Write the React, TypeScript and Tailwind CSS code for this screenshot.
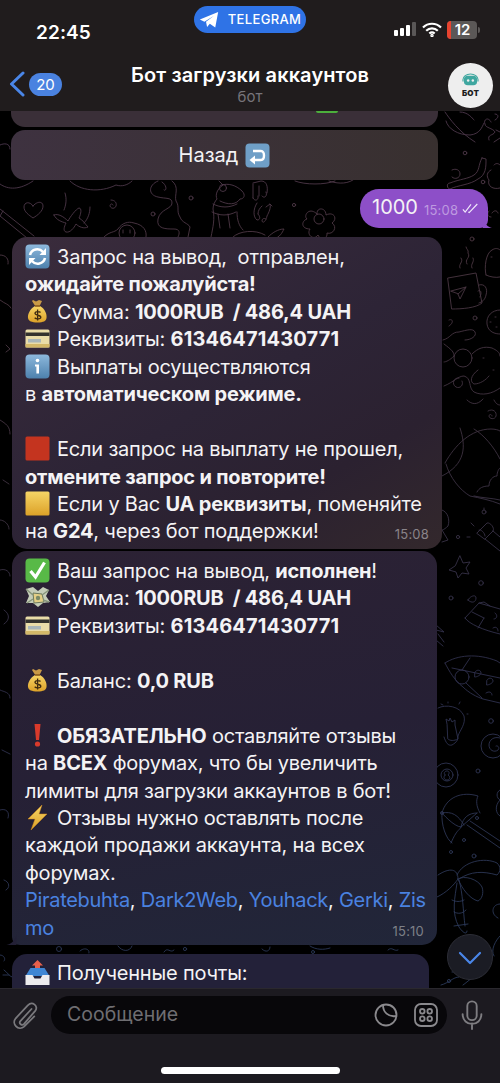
import React from "react";

const font = "font-['Inter','Noto_Sans',sans-serif]";

// emoji drawings, every one sits in a 25x25 box
function Emoji({ kind }: { kind: string }) {
  return (
    <svg viewBox="0 0 25 25" className="w-[25px] h-[25px] inline-block shrink-0 align-[-5px] mr-[7px]">
      <defs>
        <linearGradient id={`bl-${kind}`} x1="0" y1="0" x2="0" y2="1">
          <stop offset="0" stopColor="#8db8dc" />
          <stop offset="1" stopColor="#4d81ad" />
        </linearGradient>
        <linearGradient id={`gd-${kind}`} x1="0" y1="0" x2="0" y2="1">
          <stop offset="0" stopColor="#f6d566" />
          <stop offset="1" stopColor="#dca128" />
        </linearGradient>
      </defs>
      {kind === "refresh" && (
        <>
          <rect x="0.5" y="0.5" width="24" height="24" rx="4" fill={`url(#bl-${kind})`} />
          <path d="M5 11a7.5 7.5 0 0 1 13-3" fill="none" stroke="#fff" strokeWidth="2.6" />
          <path d="M20 14a7.5 7.5 0 0 1-13 3" fill="none" stroke="#fff" strokeWidth="2.6" />
          <path d="M21 4v7h-6.5z M4 21v-7h6.5z" fill="#fff" />
        </>
      )}
      {kind === "bag" && (
        <>
          <path d="M8 1l3 1.6L14 1l3 1-2.4 5h-4.4L7 2z" fill="#c99a46" />
          <path d="M10 7h5c5 3 7 8 6.500 12-.4 3-3 4.500-9 4.500S3.500 22 3 19C2.500 15 5 10 10 7z" fill={`url(#gd-${kind})`} />
          <path d="M10 7h5" stroke="#8a5a1c" strokeWidth="1.600" />
          <path d="M15.500 13.500c-1-1.300-5.500-1.300-5.500.8 0 2.500 5.800 1.400 5.800 4 0 2-4.800 2-6.100.5M12.600 10.500v11" fill="none" stroke="#3d2a10" strokeWidth="1.300" />
        </>
      )}
      {kind === "card" && (
        <>
          <rect x="0.500" y="3.500" width="24" height="18" rx="1.500" fill="#e9dca8" />
          <rect x="0.500" y="6.500" width="24" height="3.500" fill="#33322e" />
          <rect x="3" y="13" width="13" height="3.500" fill="#a9b6b8" />
          <rect x="0.500" y="18" width="24" height="3.500" fill="#d3b868" />
        </>
      )}
      {kind === "info" && (
        <>
          <rect x="0.500" y="0.500" width="24" height="24" rx="4" fill={`url(#bl-${kind})`} />
          <circle cx="12.500" cy="6.500" r="1.800" fill="#fff" />
          <path d="M10 10.500h4v9h-2.600v-7H10z" fill="#fff" />
        </>
      )}
      {kind === "red" && <rect x="0.500" y="0.500" width="24" height="24" rx="1.500" fill="#c4341f" />}
      {kind === "yellow" && <rect x="0.500" y="0.500" width="24" height="24" rx="1.500" fill={`url(#gd-${kind})`} />}
      {kind === "check" && (
        <>
          <rect x="0.500" y="0.500" width="24" height="24" rx="4" fill="#58b947" />
          <path d="M5.500 13l5 6L19.500 4.500" fill="none" stroke="#fff" strokeWidth="3.200" />
        </>
      )}
      {kind === "money" && (
        <>
          <path d="M1 4l7-2 5 4 5-4 6 3-3 6 4 6-7 1-5 4-5-4-7 0 3-7z" fill="#c5cdb8" />
          <path d="M8 8l9 1 2 8-10 1z" fill="#e3cf86" stroke="#6d7a5c" />
          <path d="M1 4l7 6M24 5l-7 5M2 18l6-4M24 17l-6-2" stroke="#86947a" strokeWidth="1.400" />
          <circle cx="13" cy="13" r="2.200" fill="#7b8a66" />
        </>
      )}
      {kind === "bang" && (
        <>
          <path d="M9.500 1h6l-1.500 16h-3z" fill="#d93a2b" />
          <circle cx="12.500" cy="21" r="2.600" fill="#d93a2b" />
        </>
      )}
      {kind === "bolt" && <path d="M17 0L3 14h7L6 25 22 9h-8z" fill={`url(#gd-${kind})`} stroke="#d58a1c" strokeWidth="0.500" />}
      {kind === "tray" && (
        <>
          <path d="M12.500 0l5.500 5.500h-3V11h-5V5.500H7z" fill="#e8604c" />
          <path d="M5.500 8h14l5 8H0.500z" fill="#3f86d4" />
          <path d="M0.500 15h7l2 3.500h6l2-3.500h7v10h-24z" fill="#ecebee" />
        </>
      )}
    </svg>
  );
}

function Line({ children }: { children?: React.ReactNode }) {
  return <div className="h-[27.45px] leading-[27.45px] whitespace-pre tracking-[-0.2px]">{children}</div>;
}

function Time({ children, className }: { children: string; className: string }) {
  return <span className={`absolute text-[13px] tracking-[0.2px] ${className}`}>{children}</span>;
}

function Link({ children }: { children: string }) {
  return <span className="text-[#4a82e0] tracking-[-0.3px]">{children}</span>;
}

// the wallpaper: thin line doodles in page coordinates, only what shows between bubbles
function Doodles() {
  return (
    <svg viewBox="0 111 500 877" className="absolute left-0 top-0 w-[500px] h-[877px]" fill="none" strokeWidth="0.900" strokeLinecap="round" strokeLinejoin="round">
      <defs>
        <linearGradient id="wall" gradientUnits="userSpaceOnUse" x1="0" y1="111" x2="120" y2="988">
          <stop offset="0" stopColor="#4b3650" />
          <stop offset="0.2" stopColor="#4d3742" />
          <stop offset="0.45" stopColor="#3d3140" />
          <stop offset="0.7" stopColor="#2e2f4c" />
          <stop offset="1" stopColor="#2a3858" />
        </linearGradient>
      </defs>
      <g stroke="url(#wall)">
        {/* strip under the back button */}
        <path d="M0 184c8 6 20 6 33-3M70 181c10 10 30 12 46 4 6 2 12 0 16-4" />
        <path d="M0 209l34 27M0 216l27 22M3 211l-3 5" />
        <path d="M33 206c-3-5-9-4-9 1 0 5 5 8 9 11 5-3 10-7 10-12 0-5-6-5-10 0z" />
        <path d="M65 193c2 6 1 12-1 17M90 207c0 6-2 12-6 16" />
        <path d="M54 215c4-2 10 2 14 6 2-4 8-12 11-13 3 0 2 6 0 10 4 2 6 6 9 9-4 2-9 0-12-3-2 4-6 9-10 8-3-1-2-5 0-9-4-1-10-3-12-8z" />
        <path d="M111 200c4 0 6 3 5 6-1 3-5 3-6 0 0-2 2-3 3-1" />
        <circle cx="153" cy="214" r="2" />
        <path d="M104 237c6-6 10-4 14-8 4-6 10-8 16-6 10 2 13 8 12 14" />
        <circle cx="127" cy="233" r="8" />
        <path d="M123 230v3M130 230v3" />
        <path d="M158 181c-10 4-10 14 0 16 8 2 14 0 14 6s-12 6-14 16c-2 10 8 10 16 10 6 0 6 4 4 8" />
        <path d="M162 182c6 4 4 10 2 8M172 181c8 6 2 14 4 20 4 6 0 10 4 16 2 6 8 6 10 10l-2 10" />
        <circle cx="191" cy="198" r="2" />
        <path d="M211 237c2-10 4-18 2-28 0-4 2-8 4-10-2-4 0-10 6-14l-4-4M222 185c6-2 14 0 20 6 4 4 2 8-2 8-4 6-12 6-20 2" />
        <circle cx="223" cy="188" r="3.500" />
        <path d="M213 204c8 4 16 4 24 0M212 212c8 4 16 4 24 0M218 214l2 14M228 214l2 14M237 212c0 8 2 14 6 18" />
        <path d="M233 237c6-6 22-8 32-2M268 237c4-4 10-8 16-8-2 4-4 8-10 10" />
        <path d="M253 183l8-2c6 0 7 6 6 12M253 184v14M259 186v10M253 198c2 4 6 2 5-2M266 192c2 4-2 7-4 4" />
        <path d="M257 203c-4 6-4 14 0 17 4 0 3-4 1-6M262 206c-2 2-4 4-4 8" />
        <path d="M266 207l4-3c1 4-1 8-3 12-1 5-4 8-5 5 0-3 3-3 4-2M270 204l2 2" />
        <circle cx="294" cy="205" r="1.600" />
        <circle cx="319" cy="219" r="5" />
        <path d="M317 214c-8-8-14 2-10 5-6 2-6 10 3 10-4 6 4 12 8 6 2 6 10 4 9-2 6 2 11-6 5-10 6-4 2-12-6-8 0-8-10-8-9-1z" />
        <path d="M295 181c10 4 30 4 40 0M329 181c6 2 16 4 24-1" />

        {/* right column, top */}
        <path d="M445 112c4 6 14 20 30 30M446 121c2 8 12 14 24 14 10-1 12-8 14-12M460 112c8 0 12 6 14 8" />
        <path d="M491 122c-3-6-8-2-6 2 0 4 8 4 10 8-2 4-8 2-6 8M495 114c4 0 4 4 0 6M496 130l4 2M494 142l6-4" />
        <path d="M482 158l4 1c0 8 0 16-8 20-8 6-20 6-28 10-3 0-4-6 0-6 10-4 18-4 24-8 6-4 4-10 8-17z" />
        <path d="M452 170c4-2 8 0 8 4 0 4-5 6-8 3" />
        <circle cx="465" cy="153" r="1.800" />
        <circle cx="483" cy="182" r="1.800" />
        <path d="M491 170c-4 2-5 6-2 10-2 6 4 10 11 8M494 165c2-2 4-2 6 0" />
        <path d="M492 213c2-3 5-3 6 0M491 217c-4 0-4-4-2-6" />
        <circle cx="472" cy="239" r="2" />
        <path d="M460 268c-2-4 4-6 1-10M467 264c-3-5 4-6 1-11 1-3-2-4-2-6M472 268c-2-4 3-6 1-10" />
        <path d="M448 278l28-5 6 30c-6 5-20 6-30 6z" />
        <path d="M479 285c6-2 9 4 7 10-1 5-4 7-7 8M478 291c3-2 4 2 2 6" />
        <path d="M451 291l15-4-6 12-2-5zM458 294l8-7" />
        <path d="M486 275c-2-8 0-22 6-25 3-2 6-2 8 0M486 275c4 2 10 3 14 2M491 257h1" />
        <circle cx="475" cy="318" r="2" />
        <path d="M449 320c4-2 5 3 0 6M500 310c-8 0-14 6-13 14 1 8 8 10 13 10" />
        <path d="M495 317h1M490 322h1M496 327h1" />
        <path d="M443 340c8-2 8-8 16-8 8-2 14-4 16 0 2 4-4 8-10 8" />
        <circle cx="463" cy="358" r="9" />
        <path d="M444 344c8 6 10 8 10 12-4 4-8 6-10 6M472 354c6-6 12-8 20-6 4 2 8 4 8 8M444 386c10-4 14-10 20-10 8 2 4 12 10 16 8 4 18 2 26-4" />
        <path d="M459 378c-5-1-8 6-3 9 4 2 8-2 6-6M483 358h1M493 370h1" />
        <path d="M478 370c-8 6-8 12-4 14 6 0 12-4 15-8" />

        {/* right column, middle */}
        <path d="M467 400c4 4 10 6 16-1M488 411c5-3 9 1 8 5-1 4-7 3-7 0 0-2 3-2 3 0" />
        <path d="M494 400c2 4 4 5 6 5" />
        <path d="M445 463c10-18 26-34 46-34 4 0 8 1 9 2" />
        <path d="M460 428c6 18 6 36-18 48M474 429c10 6 20 18 26 30" />
        <path d="M446 464c4 14 14 26 24 32 10 2 20 4 30 8M474 496c8 2 18 2 26 4M477 492c2-4 6-6 12-6 0-6 4-10 8-10 0-4 2-8 3-8" />
        <path d="M442 510c6 2 8 10 6 16-4 4-8 6-12 4" />
        <path d="M442 530l6 10-6 2" />
        <circle cx="458" cy="537" r="1.600" />
        <path d="M484 508v2M474 526l-3-3M470 537h-3" />
        <path d="M477 533l10-10c3-1 8 5 6 8l-8 8zM479 530c2-1 6 3 6 6M493 531l7 6M485 539l15 12" />
        <circle cx="484" cy="512" r="2" />
        <path d="M460 556l3 7 7-1-4 6 3 6-7-1-4 5-2-6-7-2 6-4z" />
        <circle cx="481" cy="583" r="2.300" />
        <circle cx="451" cy="598" r="2" />
        <path d="M468 600c2-4 8-6 8-2 0 4-4 6-8 2z" />
        <path d="M465 618l14-15 21 6M465 618c4 6 18 12 35 16M479 603l5-1 6 4M472 612l12 6M484 618l-6 10" />
        <path d="M495 613c3 2 2 6-1 6M493 628c3-2 5 0 5 3" />
        <path d="M436 625l8 7-8-2M438 634l6 8M436 640l7 6" />
        <path d="M445 663c12-8 32-10 52-2l3 2M445 663c4 8 10 18 18 24 6 6 14 10 20 12l17 4" />
        <circle cx="462" cy="677" r="7" />
        <path d="M462 670l8-12M466 683l16 15M452 668l48 10" />
        <path d="M475 672c2-3 6-2 6 1 0 2-4 4-6 4zM487 680c2-3 6-2 6 1 0 2-4 4-6 4zM486 693c3-2 6-1 6 2" />

        {/* right column, bottom */}
        <path d="M438 708c8-4 22-2 26 8 2 8-4 14-6 20 0 4-1 6-6 9-4 1-6-2-8-8" />
        <path d="M447 724l-1-5 3 2 1-3 2 4 3-2 0 5 3 14c-4 2-8 2-10 0z" />
        <path d="M441 704l2 1M448 702v1M460 702l-1 2M467 714h1" />
        <circle cx="491" cy="721" r="2.300" />
        <circle cx="493" cy="746" r="12" />
        <path d="M500 738c-6-2-11 2-11 7 0 5 5 8 9 5 2-2 0-5-2-4" />
        <circle cx="446" cy="775" r="12" />
        <circle cx="447" cy="775" r="6" />
        <path d="M445 775c-2-2 0-4 2-4s3 2 1 4c3 2 2 5-1 5s-4-3-2-5z" />
        <circle cx="478" cy="771" r="2" />
        <path d="M500 790c-4 2-4 8 0 10" />
        <path d="M442 813c4-16 20-22 36-17-2 4-2 10 2 17M442 813c-1 12 4 26 10 30" />
        <path d="M442 813c10-2 16 2 22 12M477 813c-8 0-14 4-16 14 -2 4-4 2-10 16" />
        <path d="M442 813c0 0 12 14 19 14M477 813l-16 14M467 825l33 23M470 821l30 20" />
        <circle cx="442" cy="813" r="1.500" />
        <circle cx="477" cy="818" r="1.500" />
        <circle cx="464" cy="840" r="1.500" />
        <circle cx="474" cy="856" r="2" />
        <circle cx="451" cy="852" r="1.500" />
        <path d="M500 800c-6 6-4 14 0 16M500 904c-8 0-10 10-2 14M500 936c-4 4-10 14-6 20" />
        <path d="M457 875c6-14 28-18 40-12 4 4 4 8 0 12-14-4-26-4-38 4" />
        <path d="M438 875c12-8 20-6 20 4-4 6-12 14-21 18M458 879c6-4 20 0 24 8 2 6 0 12-4 14-8-2-16-12-20-22z" />
        <path d="M457 883c-2 14-6 30 2 44 4 6 8 8 8 4M459 880c4 14 4 30 6 46M452 900c4 2 8 2 12 0M454 912c4 2 8 2 12-2M454 926l14-2" />
        <path d="M441 985c8-2 12-8 18-8M463 985c6-4 10-10 16-8M452 972h1" />
        <circle cx="449" cy="981" r="1.600" />

        {/* bits on the left edge */}
        <path d="M0 145c4-2 10-2 10 4M0 255c6 0 9 4 8 9M0 300c5 4 9 4 11 8M6 345l4 4-4 3M0 420c6 4 10 6 10 14M3 480l6 4M0 520c4 0 9 4 9 9" />
        <path d="M0 570c6-2 10 2 10 6M4 610c6 4 6 10 0 14M0 690c4 2 10 2 10 8M2 750l8 4M0 810c6-2 10 2 8 8M4 880c6 2 6 8 2 10" />
        <path d="M0 955c4 0 6 4 4 6M3 975h6M4 970c4 3 5 6 8 7" />

        {/* gap over the third bubble */}
        <path d="M80 951c4-4 10-2 9 2M118 946c4 6 12 6 14 0M164 952c4-6 6 2 10-2M262 949c4 4 8 2 8-2M310 946c6 4 14 4 20 2M388 950c4-4 6 2 10 0" />
        <circle cx="59" cy="949" r="2.500" />
        <circle cx="185" cy="949" r="1.600" />
        <circle cx="313" cy="952" r="1.500" />
      </g>
    </svg>
  );
}

export default function App() {
  return (
    <div className={`w-[500px] h-[1083px] flex flex-col overflow-hidden bg-black text-white ${font}`}>
      {/* шапка */}
      <div className="relative z-10 h-[111px] shrink-0 bg-[#201c1d]">
        <div className="absolute left-[36px] top-[19px] text-[19px] font-semibold tracking-[0.1px]">22:45</div>

        <div className="absolute left-[194px] top-[6px] w-[112px] h-[27px] rounded-full bg-[#2f73e6] flex items-center justify-center gap-[7px]">
          <svg viewBox="0 0 24 24" className="w-[24px] h-[20px] -ml-[2px]" fill="#fff">
            <path d="M1 11.500L23 2.500 19.500 21l-6.500-4.600-3.300 4.100-1.300-6.300L18 7 6.500 14z" />
          </svg>
          <span className="text-[13px] font-medium tracking-[0.35px]">TELEGRAM</span>
        </div>

        <div className="absolute left-[394px] top-[22px] flex items-end gap-[2px]">
          <div className="w-[4px] h-[6px] rounded-[1px] bg-white" />
          <div className="w-[4px] h-[8px] rounded-[1px] bg-white" />
          <div className="w-[4px] h-[11px] rounded-[1px] bg-white" />
          <div className="w-[4px] h-[14px] rounded-[1px] bg-[#5a5757]" />
        </div>
        <svg viewBox="0 0 20 15" className="absolute left-[422px] top-[22px] w-[20px] h-[15px]" fill="none" stroke="#fff" strokeWidth="2.200">
          <path d="M1 5.500c5-5 13-5 18 0M4.200 8.700c3.300-3.200 8.300-3.200 11.600 0M7.300 11.500c1.500-1.300 3.900-1.300 5.400 0" />
          <circle cx="10" cy="13.500" r="0.600" fill="#fff" />
        </svg>
        <div className="absolute left-[447px] top-[21px] w-[30px] h-[18px] rounded-[4px] bg-[#5b5857] flex">
          <div className="w-[4px] rounded-l-[4px] bg-[#e8432f]" />
          <div className="flex-1 text-center text-[15px] leading-[18px] font-semibold pr-[3px]">12</div>
        </div>
        <div className="absolute left-[478px] top-[27px] w-[2px] h-[6px] rounded-r-sm bg-[#5b5857]" />

        <svg viewBox="0 0 16 26" className="absolute left-[9px] top-[71px] w-[16px] h-[26px]" fill="none" stroke="#4a86e8" strokeWidth="3" strokeLinecap="round" strokeLinejoin="round">
          <path d="M14 2L2.500 13 14 24" />
        </svg>
        <div className="absolute left-[29px] top-[73px] w-[33px] h-[23px] rounded-full bg-[#4a82e0] text-center text-[15px] leading-[23px]">20</div>

        <div className="absolute left-0 right-0 top-[63px] text-center text-[20px] leading-[25px] font-semibold tracking-[0.1px]">Бот загрузки аккаунтов</div>
        <div className="absolute left-0 right-0 top-[88px] text-center text-[15px] leading-[17px] text-[#77747a]">бот</div>

        <div className="absolute left-[448px] top-[63px] w-[45px] h-[45px] rounded-full bg-[#eeeeee] flex flex-col items-center">
          <svg viewBox="0 0 20 16" className="w-[19px] h-[15px] mt-[10px]" fill="none">
            <rect x="3" y="3" width="14" height="10" rx="4" fill="#3fa7a0" />
            <path d="M2 9V7a8 6 0 0 1 16 0v2" stroke="#3fa7a0" strokeWidth="1.200" />
            <circle cx="7.500" cy="8" r="1.300" fill="#eee" />
            <circle cx="12.500" cy="8" r="1.300" fill="#eee" />
          </svg>
          <span className="mt-[1px] text-[8px] leading-[9px] font-black text-[#1d1d1d] tracking-[0.2px]">БОТ</span>
        </div>
      </div>

      {/* сообщения */}
      <div className="relative flex-1 min-h-0 overflow-hidden pl-[12px] text-[20px] text-[#f4f3f5]">
        <Doodles />
        <div className="relative">
          <div className="h-[16px] w-[427px] -ml-px rounded-b-[14px] bg-[#3a2f38] flex justify-end pr-[100px]">
            <div className="w-[22px] h-[2px] bg-[#4caf3c] rounded-b-sm" />
          </div>
          <div className="mt-[3px] h-[50px] w-[427px] -ml-px rounded-[14px] bg-[linear-gradient(90deg,#3e3240,#38302f)] flex items-center justify-center gap-[7px]">
            <span>Назад</span>
            <svg viewBox="0 0 25 25" className="w-[25px] h-[25px]">
              <rect x="0.500" y="0.500" width="24" height="24" rx="4" fill="#6f9fc7" />
              <path d="M8 17h8c4 0 4-9 0-9H8" fill="none" stroke="#fff" strokeWidth="2.400" />
              <path d="M10 12.500L4.500 17l5.500 4.500z" fill="#fff" />
            </svg>
          </div>

          <div className="relative mt-[9px] ml-[348px] w-[128px] h-[39px] rounded-[19px] rounded-br-[8px] bg-[#8d4fc8]">
            <span className="absolute left-[12px] top-[5px] text-[20px] leading-[27px]">1000</span>
            <Time className="left-[64px] top-[11px] text-[#bd9ae0] leading-[20px]">15:08</Time>
            <svg viewBox="0 0 20 12" className="absolute left-[102px] top-[14px] w-[18px] h-[11px]" fill="none" stroke="#f0e8fa" strokeWidth="1.300">
              <path d="M1 7l2.500 3L10 1.500M7 10l1 .5L17 1" />
            </svg>
            <svg viewBox="0 0 10 10" className="absolute left-[122px] top-[30px] w-[11px] h-[9px]" fill="#8d4fc8">
              <path d="M0 0c2 5 5 9 10 10H0z" />
            </svg>
          </div>

          <div className="relative mt-[9px] w-[430px] h-[312px] rounded-[15px] bg-[linear-gradient(150deg,#3a2c3c_0%,#2d2436_50%,#2b2130_75%,#33282c_100%)] pl-[13px] pt-[7px]">
            <Line><Emoji kind="refresh" />Запрос на вывод,  отправлен,</Line>
            <Line><b>ожидайте пожалуйста!</b></Line>
            <Line><Emoji kind="bag" />Сумма: <b>1000RUB  / 486,4 UAH</b></Line>
            <Line><Emoji kind="card" />Реквизиты: <b className="tracking-[0.15px]">61346471430771</b></Line>
            <Line><Emoji kind="info" />Выплаты осуществляются</Line>
            <Line>в <b>автоматическом режиме.</b></Line>
            <Line />
            <Line><Emoji kind="red" />Если запрос на выплату не прошел,</Line>
            <Line><b>отмените запрос и повторите!</b></Line>
            <Line><Emoji kind="yellow" />Если у Вас <b>UA реквизиты</b>, поменяйте</Line>
            <Line>на <b>G24</b>, через бот поддержки!</Line>
            <Time className="right-[13px] bottom-[5px] text-[#8a8489]">15:08</Time>
          </div>

          <div className="relative mt-[2px] w-[425px] h-[394px] rounded-[15px] rounded-bl-[8px] bg-[linear-gradient(170deg,#2c2234_0%,#262035_50%,#212639_100%)] pl-[13px] pt-[7px]">
            <Line><Emoji kind="check" />Ваш запрос на вывод, <b>исполнен</b>!</Line>
            <Line><Emoji kind="money" />Сумма: <b>1000RUB  / 486,4 UAH</b></Line>
            <Line><Emoji kind="card" />Реквизиты: <b className="tracking-[0.15px]">61346471430771</b></Line>
            <Line />
            <Line><Emoji kind="bag" />Баланс: <b>0,0 RUB</b></Line>
            <Line />
            <Line><Emoji kind="bang" /><b>ОБЯЗАТЕЛЬНО</b> оставляйте отзывы</Line>
            <Line>на <b>ВСЕХ</b> форумах, что бы увеличить</Line>
            <Line>лимиты для загрузки аккаунтов в бот!</Line>
            <Line><Emoji kind="bolt" />Отзывы нужно оставлять после</Line>
            <Line>каждой продажи аккаунта, на всех</Line>
            <Line>форумах.</Line>
            <Line>
              <Link>Piratebuhta</Link>, <Link>Dark2Web</Link>, <Link>Youhack</Link>, <Link>Gerki</Link>, <Link>Zis</Link>
            </Line>
            <Line><Link>mo</Link></Line>
            <Time className="right-[13px] bottom-[4px] text-[#7d8088]">15:10</Time>
            <svg viewBox="0 0 10 10" className="absolute -left-[6px] bottom-0 w-[11px] h-[10px]" fill="#232036">
              <path d="M10 0C9 5 5 9 0 10h10z" />
            </svg>
          </div>

          <div className="mt-[9px] w-[417px] h-[40px] rounded-t-[15px] bg-[#232139] pl-[13px] pt-[6px]">
            <Line><Emoji kind="tray" />Полученные почты:</Line>
          </div>
        </div>

        <div className="absolute left-[447px] top-[823px] w-[46px] h-[46px] rounded-full bg-[#1b1c24] border border-[#2c2d36] flex items-center justify-center">
          <svg viewBox="0 0 24 14" className="w-[24px] h-[14px] mt-[2px]" fill="none" stroke="#4a86e8" strokeWidth="2.200" strokeLinecap="round" strokeLinejoin="round">
            <path d="M2 2l10 10L22 2" />
          </svg>
        </div>
      </div>

      {/* поле ввода */}
      <div className="relative z-10 h-[95px] shrink-0 bg-[#1c1a20] border-t border-[#2a282e]">
        <div className="flex items-center h-[46px] mt-[3px]">
          <svg viewBox="0 0 28 30" className="w-[26px] h-[29px] ml-[12px] mr-[13px]" fill="none" stroke="#7a797d" strokeWidth="1.900" strokeLinecap="round">
            <path d="M21 8L9 21c-2 2.500 1.500 5.500 4 3L25 10c4-5-3-11-8-6L4 18c-5 6 3 14 9 9l11-11" />
          </svg>
          <div className="w-[396px] h-[38px] rounded-[19px] bg-[#08070a] flex items-center pl-[16px] pr-[9px]">
            <span className="flex-1 text-[19.500px] text-[#6f6e72]">Сообщение</span>
            <svg viewBox="0 0 24 24" className="w-[24px] h-[24px] mr-[16px]" fill="none" stroke="#8a898d" strokeWidth="1.800">
              <path d="M12 1.500a10.500 10.500 0 1 0 10.500 10.500c0-6-4.500-10.500-10.500-10.500z" />
              <path d="M9 2c0 7 5 12.500 13.500 11" />
            </svg>
            <svg viewBox="0 0 24 24" className="w-[24px] h-[24px]" fill="none" stroke="#8a898d" strokeWidth="1.800">
              <rect x="1" y="1" width="22" height="22" rx="6" />
              <circle cx="8.300" cy="8.300" r="2.300" />
              <circle cx="15.700" cy="8.300" r="2.300" />
              <circle cx="8.300" cy="15.700" r="2.300" />
              <circle cx="15.700" cy="15.700" r="2.300" />
            </svg>
          </div>
          <svg viewBox="0 0 24 32" className="w-[24px] h-[30px] ml-[13px]" fill="none" stroke="#7e7d81" strokeWidth="2" strokeLinecap="round">
            <rect x="7" y="1.500" width="10" height="20" rx="5" />
            <path d="M2 15c0 14 20 14 20 0M12 25v6" />
          </svg>
        </div>
        <div className="w-[179px] h-[7px] rounded-full bg-white mx-auto mt-[29px]" />
      </div>
    </div>
  );
}
